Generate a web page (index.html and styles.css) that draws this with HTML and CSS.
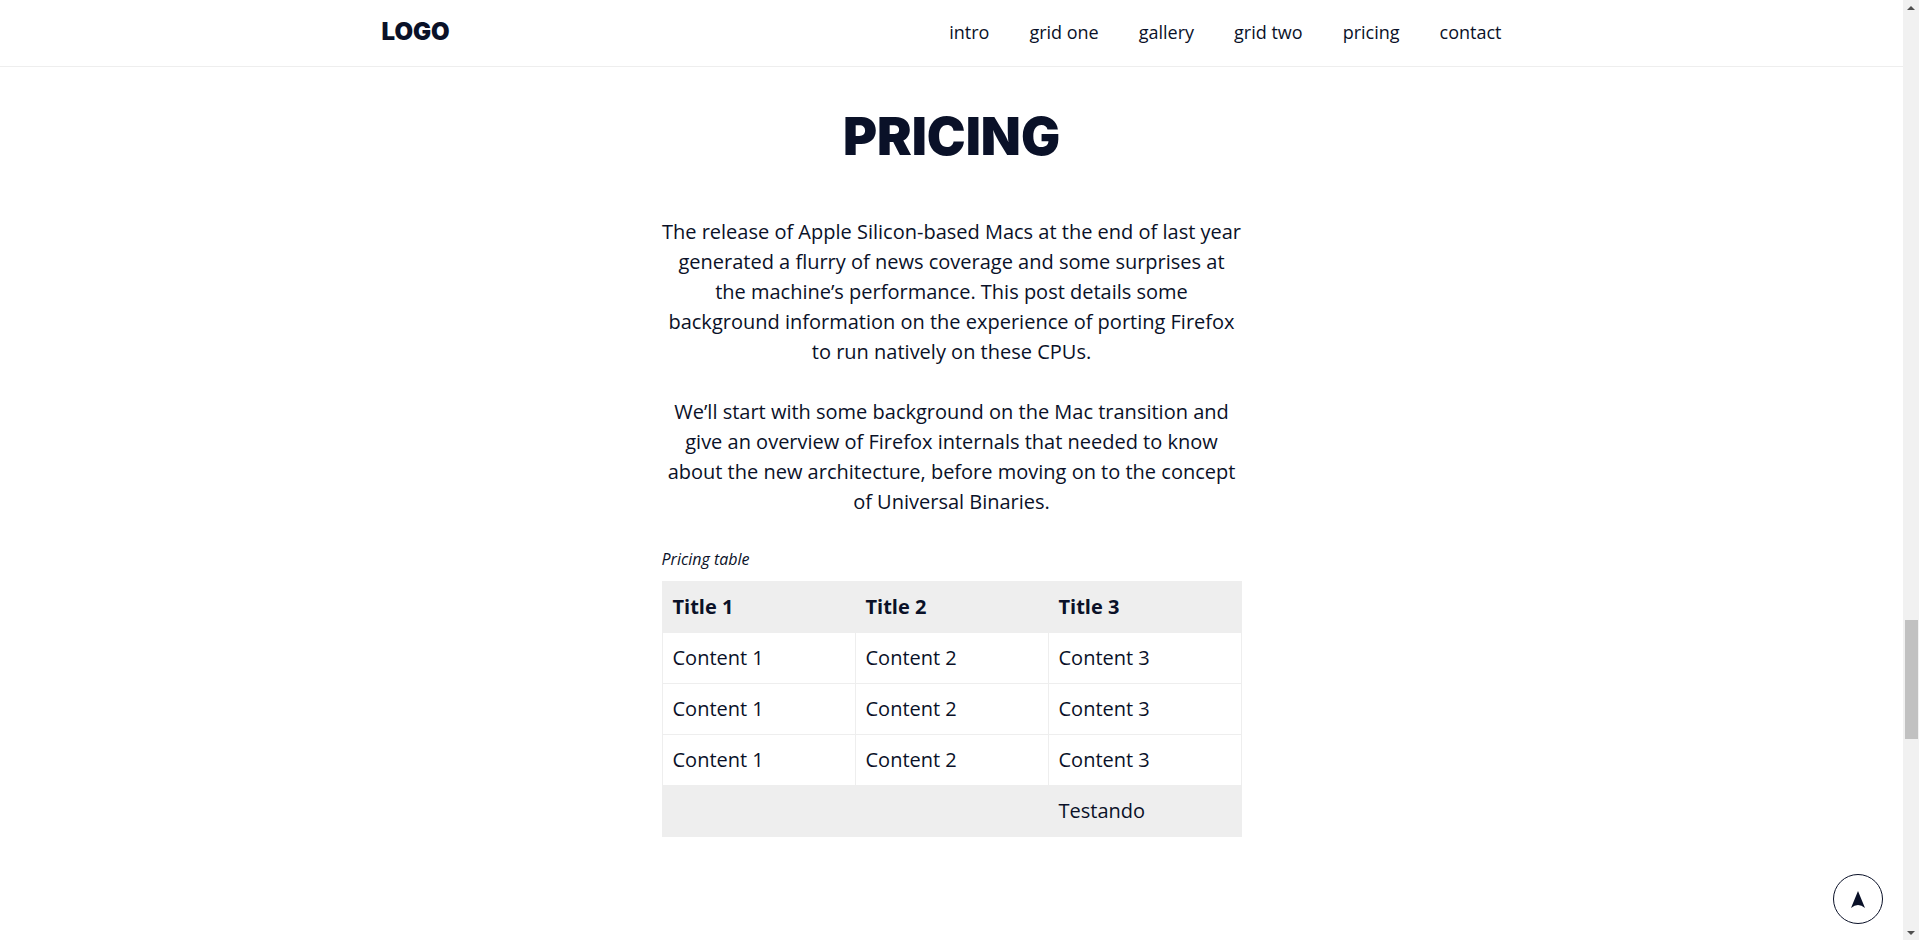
FILE: index.html
```html
<!DOCTYPE html>
<html lang="en">
<head>
<meta charset="utf-8">
<title>Pricing</title>
<meta name="viewport" content="width=device-width, initial-scale=1">
<link rel="stylesheet" href="styles.css">
</head>
<body>
<div class="page">
  <header class="header">
    <div class="header-content">
      <a class="logo" href="#">LOGO</a>
      <nav class="menu">
        <a href="#intro">intro</a>
        <a href="#grid-one">grid one</a>
        <a href="#gallery">gallery</a>
        <a href="#grid-two">grid two</a>
        <a href="#pricing">pricing</a>
        <a href="#contact">contact</a>
      </nav>
    </div>
  </header>
  <main class="section" id="pricing">
    <h1 class="title">PRICING</h1>
    <p>The release of Apple Silicon-based Macs at the end of last year generated a flurry of news coverage and some surprises at the machine’s performance. This post details some background information on the experience of porting Firefox to run natively on these CPUs.</p>
    <p>We’ll start with some background on the Mac transition and give an overview of Firefox internals that needed to know about the new architecture, before moving on to the concept of Universal Binaries.</p>
    <table class="table">
      <caption>Pricing table</caption>
      <thead>
        <tr><th scope="col">Title 1</th><th scope="col">Title 2</th><th scope="col">Title 3</th></tr>
      </thead>
      <tbody>
        <tr><td>Content 1</td><td>Content 2</td><td>Content 3</td></tr>
        <tr><td>Content 1</td><td>Content 2</td><td>Content 3</td></tr>
        <tr><td>Content 1</td><td>Content 2</td><td>Content 3</td></tr>
      </tbody>
      <tfoot>
        <tr><td></td><td></td><td>Testando</td></tr>
      </tfoot>
    </table>
  </main>
  <a class="back-to-top" href="#" aria-label="Back to top">
    <svg width="14" height="17" viewBox="0 0 14 17" aria-hidden="true"><path d="M7 0 14 17Q7 11 0 17Z"/></svg>
  </a>
</div>
<div class="scrollbar" aria-hidden="true">
  <svg width="8" height="4" viewBox="0 0 8 4"><path d="M4 0 8 4H0Z"/></svg>
  <div class="track"><div class="thumb"></div></div>
  <svg width="8" height="4" viewBox="0 0 8 4"><path d="M0 0H8L4 4Z"/></svg>
</div>
</body>
</html>
```
FILE: styles.css
```css
* {
  box-sizing: border-box;
}

body {
  margin: 0;
  height: 100vh;
  display: flex;
  overflow: hidden;
  background: #fff;
  color: #0a1128;
  font: 20px/30px "Open Sans", sans-serif;
}

a {
  color: inherit;
  text-decoration: none;
}

.page {
  flex: 1;
  position: relative;
}

.header {
  padding-bottom: 2px;
  border-bottom: 1px solid #eee;
}

.header-content {
  max-width: 1140px;
  margin: 0 auto;
  display: flex;
  align-items: center;
  justify-content: space-between;
}

.logo {
  font: 900 24px/30px Inter, Montserrat, sans-serif;
}

.menu {
  display: flex;
}

.menu a {
  padding: 17px 20px;
  font-size: 18px;
}

.section {
  max-width: 580px;
  margin: 0 auto;
  padding: 40px 0;
  text-align: center;
}

.title {
  margin: 0 0 50px;
  font: 900 52px/60px Inter, Montserrat, sans-serif;
}

p {
  margin: 0 0 30px;
}

.table {
  width: 100%;
  table-layout: fixed;
  border-collapse: collapse;
  text-align: left;
}

.table caption {
  padding-bottom: 10px;
  font-size: 16px;
  line-height: 24px;
  font-style: italic;
  text-align: left;
}

.table th,
.table td {
  height: 51px;
  padding: 10px;
  border: 1px solid #eee;
}

.table thead,
.table tfoot {
  background: #eee;
}

.back-to-top {
  position: absolute;
  right: 20px;
  bottom: 16px;
  width: 50px;
  height: 50px;
  display: flex;
  align-items: center;
  justify-content: center;
  border: 1px solid #0a1128;
  border-radius: 50%;
  background: #fff;
}

.back-to-top svg {
  fill: #0a1128;
}

.scrollbar {
  width: 16px;
  padding: 6px 0 5px;
  display: flex;
  flex-direction: column;
  align-items: center;
  background: #f1f1f1;
}

.scrollbar svg {
  flex: none;
  fill: #505050;
}

.track {
  flex: 1;
  width: 13px;
  display: grid;
  grid-template-rows: 610fr 119fr 192fr;
}

.thumb {
  grid-row: 2;
  background: #c1c1c1;
}
```
